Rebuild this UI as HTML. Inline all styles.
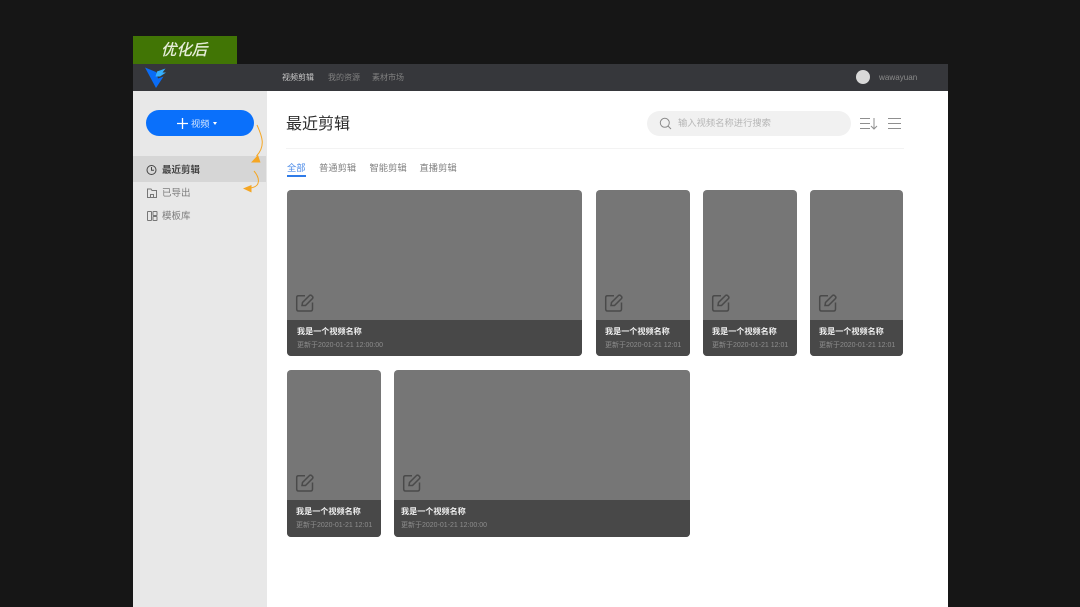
<!DOCTYPE html>
<html><head><meta charset="utf-8"><style>
*{margin:0;padding:0;box-sizing:border-box}
html,body{width:1080px;height:607px;overflow:hidden;background:#161616;font-family:"Liberation Sans","Noto Sans CJK SC",sans-serif}
#w{position:absolute;left:0;top:0;width:1080px;height:607px;overflow:hidden;filter:blur(.3px)}
.a{position:absolute;white-space:nowrap}
.card{position:absolute;background:#767676;border-radius:4px;overflow:hidden;height:166.5px;width:94px}
.card .b{position:absolute;left:0;right:0;bottom:0;height:36px;background:#484848}
.card .t{position:absolute;left:10px;top:6px;font-size:8.1px;line-height:12px;color:#eee;font-weight:700;white-space:nowrap}
.card .d{position:absolute;left:10px;top:20px;font-size:7px;line-height:11px;color:#8d8d8d;white-space:nowrap}
.card svg{position:absolute;left:8px;top:103.5px}
.r2{height:167px;top:370px}
.r2 .b{height:37px}
.r2 svg{top:103px}
</style></head><body><div id="w">
<div class="a" style="left:133px;top:36px;width:104px;height:28px;background:#417505"></div>
<div class="a" style="left:161px;top:42px;font-size:15.4px;line-height:18px;font-style:italic;color:#e8efdc;-webkit-text-stroke:.3px #e8efdc">优化后</div>
<div class="a" style="left:133px;top:64px;width:815px;height:27px;background:#36373b"></div>
<svg class="a" style="left:140px;top:62px" width="30" height="30" viewBox="140 62 30 30"><path d="M145 67.500L156 72L158 78.500L163.500 76.500L156 88Z" fill="#0a6cf5"/><path d="M157 71.500L165.500 68.500L162.500 72.500H166L160 76.500H155.500Z" fill="#35b0ff"/></svg>
<div class="a" style="left:282px;top:71px;font-size:8px;line-height:13px;color:#c9c9c9">视频剪辑</div>
<div class="a" style="left:328px;top:71px;font-size:8px;line-height:13px;color:#808080">我的资源</div>
<div class="a" style="left:372px;top:71px;font-size:8px;line-height:13px;color:#808080">素材市场</div>
<div class="a" style="left:856px;top:70px;width:14px;height:14px;border-radius:50%;background:#d8d8d8"></div>
<div class="a" style="left:879px;top:72px;font-size:8.100px;line-height:11px;color:#8a8a8a">wawayuan</div>
<div class="a" style="left:133px;top:91px;width:134px;height:516px;background:#e8e8e8"></div>
<div class="a" style="left:267px;top:91px;width:681px;height:516px;background:#fff"></div>
<div class="a" style="left:146px;top:110px;width:108px;height:26px;border-radius:13px;background:#0a70fb"></div>
<svg class="a" style="left:177px;top:118px" width="11" height="11"><path d="M5.500 0V11M0 5.500H11" stroke="#fff" stroke-width="1.300"/></svg>
<div class="a" style="left:191px;top:116.500px;font-size:9.300px;line-height:14px;color:#d5e6ff">视频</div>
<div class="a" style="left:213px;top:122px;border:2.500px solid transparent;border-top:3px solid #fff;border-bottom:0"></div>
<div class="a" style="left:133px;top:156px;width:133px;height:26px;background:#d6d6d6"></div>
<svg class="a" style="left:146px;top:164px" width="11" height="12" fill="none" stroke="#444"><circle cx="5.500" cy="6" r="4.500"/><path d="M5.500 3V6.200H8"/></svg>
<div class="a" style="left:162px;top:164px;font-size:9.500px;line-height:14px;font-weight:700;color:#444">最近剪辑</div>
<svg class="a" style="left:147px;top:187px" width="11" height="12" fill="none" stroke="#777"><path d="M.5 2H4L5 3.500H9.500V10.500H.5Z"/><path d="M3.500 10V7.500H6.500V10"/></svg>
<div class="a" style="left:162px;top:187px;font-size:9.500px;line-height:14px;color:#7d7d7d">已导出</div>
<svg class="a" style="left:147px;top:210px" width="11" height="12" fill="none" stroke="#777"><rect x=".5" y="1.500" width="4" height="9" rx=".5"/><rect x="6" y="1.500" width="4" height="4" rx=".5"/><rect x="6" y="6.500" width="4" height="4" rx=".5"/></svg>
<div class="a" style="left:162px;top:210px;font-size:9.500px;line-height:14px;color:#7d7d7d">模板库</div>
<svg class="a" style="left:235px;top:120px" width="40" height="76" viewBox="235 120 40 76" fill="none" stroke="#f5a623" stroke-width="1"><path d="M257 125C262 136 266 146 256.500 156"/><path d="M254 171C260 178 261 187 250 188"/><path d="M251 162.500H260.500L258 155Z" fill="#f5a623" stroke="none"/><path d="M243 188.500L251.500 185V192.500Z" fill="#f5a623" stroke="none"/></svg>
<div class="a" style="left:286px;top:113.500px;font-size:16px;line-height:21px;color:#2c2c2c">最近剪辑</div>
<div class="a" style="left:647px;top:111px;width:204px;height:25px;border-radius:13px;background:#f1f1f1"></div>
<svg class="a" style="left:659px;top:117px" width="13" height="13" fill="none" stroke="#8a8a8a"><circle cx="5.800" cy="5.800" r="4.500"/><path d="M9 9L12 12"/></svg>
<div class="a" style="left:678px;top:117px;font-size:9.300px;line-height:13px;color:#b5b5b5">输入视频名称进行搜索</div>
<svg class="a" style="left:859px;top:117px" width="43" height="13" fill="none" stroke="#8f8f8f"><path d="M1 1.500H11M1 6.500H11M1 11.500H11M15 1V12M12 9L15 12L18 9M29 1.500H42M29 6.500H42M29 11.500H42"/></svg>
<div class="a" style="left:286px;top:148px;width:618px;height:1px;background:#f3f3f3"></div>
<div class="a" style="left:287px;top:161px;font-size:9.300px;line-height:14px;color:#4a8ae8">全部</div>
<div class="a" style="left:287px;top:175px;width:19px;height:2px;background:#2f7be8"></div>
<div class="a" style="left:319px;top:161px;font-size:9.300px;line-height:14px;color:#808080">普通剪辑</div>
<div class="a" style="left:369.500px;top:161px;font-size:9.300px;line-height:14px;color:#808080">智能剪辑</div>
<div class="a" style="left:419.500px;top:161px;font-size:9.300px;line-height:14px;color:#808080">直播剪辑</div>
<div class="card" style="left:287px;top:189.500px;width:295px"><svg width="20" height="20" fill="none" stroke="#4a4a4a" stroke-width="1.500"><path d="M10 2.700H3.500Q1.700 2.700 1.700 4.500V16Q1.700 18 3.500 18H15.500Q17.500 18 17.500 16V9.500"/><path d="M7 12.500L7.500 9.500L14.500 2.500Q15.500 1.700 16.500 2.500L17.500 3.500Q18.300 4.500 17.500 5.500L10.500 12.500Z"/></svg><div class="b"><div class="t">我是一个视频名称</div><div class="d">更新于2020-01-21 12:00:00</div></div></div>
<div class="card" style="left:596px;top:189.500px"><svg width="20" height="20" fill="none" stroke="#4a4a4a" stroke-width="1.500"><path d="M10 2.700H3.500Q1.700 2.700 1.700 4.500V16Q1.700 18 3.500 18H15.500Q17.500 18 17.500 16V9.500"/><path d="M7 12.500L7.500 9.500L14.500 2.500Q15.500 1.700 16.500 2.500L17.500 3.500Q18.300 4.500 17.500 5.500L10.500 12.500Z"/></svg><div class="b"><div class="t" style="left:9px">我是一个视频名称</div><div class="d" style="left:9px">更新于2020-01-21 12:01</div></div></div>
<div class="card" style="left:703px;top:189.500px"><svg width="20" height="20" fill="none" stroke="#4a4a4a" stroke-width="1.500"><path d="M10 2.700H3.500Q1.700 2.700 1.700 4.500V16Q1.700 18 3.500 18H15.500Q17.500 18 17.500 16V9.500"/><path d="M7 12.500L7.500 9.500L14.500 2.500Q15.500 1.700 16.500 2.500L17.500 3.500Q18.300 4.500 17.500 5.500L10.500 12.500Z"/></svg><div class="b"><div class="t" style="left:9px">我是一个视频名称</div><div class="d" style="left:9px">更新于2020-01-21 12:01</div></div></div>
<div class="card" style="left:810px;top:189.500px;width:93px"><svg width="20" height="20" fill="none" stroke="#4a4a4a" stroke-width="1.500"><path d="M10 2.700H3.500Q1.700 2.700 1.700 4.500V16Q1.700 18 3.500 18H15.500Q17.500 18 17.500 16V9.500"/><path d="M7 12.500L7.500 9.500L14.500 2.500Q15.500 1.700 16.500 2.500L17.500 3.500Q18.300 4.500 17.500 5.500L10.500 12.500Z"/></svg><div class="b"><div class="t" style="left:9px">我是一个视频名称</div><div class="d" style="left:9px">更新于2020-01-21 12:01</div></div></div>
<div class="card r2" style="left:287px"><svg width="20" height="20" fill="none" stroke="#4a4a4a" stroke-width="1.500"><path d="M10 2.700H3.500Q1.700 2.700 1.700 4.500V16Q1.700 18 3.500 18H15.500Q17.500 18 17.500 16V9.500"/><path d="M7 12.500L7.500 9.500L14.500 2.500Q15.500 1.700 16.500 2.500L17.500 3.500Q18.300 4.500 17.500 5.500L10.500 12.500Z"/></svg><div class="b"><div class="t" style="left:9px">我是一个视频名称</div><div class="d" style="left:9px">更新于2020-01-21 12:01</div></div></div>
<div class="card r2" style="left:394px;width:295.500px"><svg width="20" height="20" fill="none" stroke="#4a4a4a" stroke-width="1.500"><path d="M10 2.700H3.500Q1.700 2.700 1.700 4.500V16Q1.700 18 3.500 18H15.500Q17.500 18 17.500 16V9.500"/><path d="M7 12.500L7.500 9.500L14.500 2.500Q15.500 1.700 16.500 2.500L17.500 3.500Q18.300 4.500 17.500 5.500L10.500 12.500Z"/></svg><div class="b"><div class="t" style="left:7px">我是一个视频名称</div><div class="d" style="left:7px">更新于2020-01-21 12:00:00</div></div></div>
</div></body></html>
